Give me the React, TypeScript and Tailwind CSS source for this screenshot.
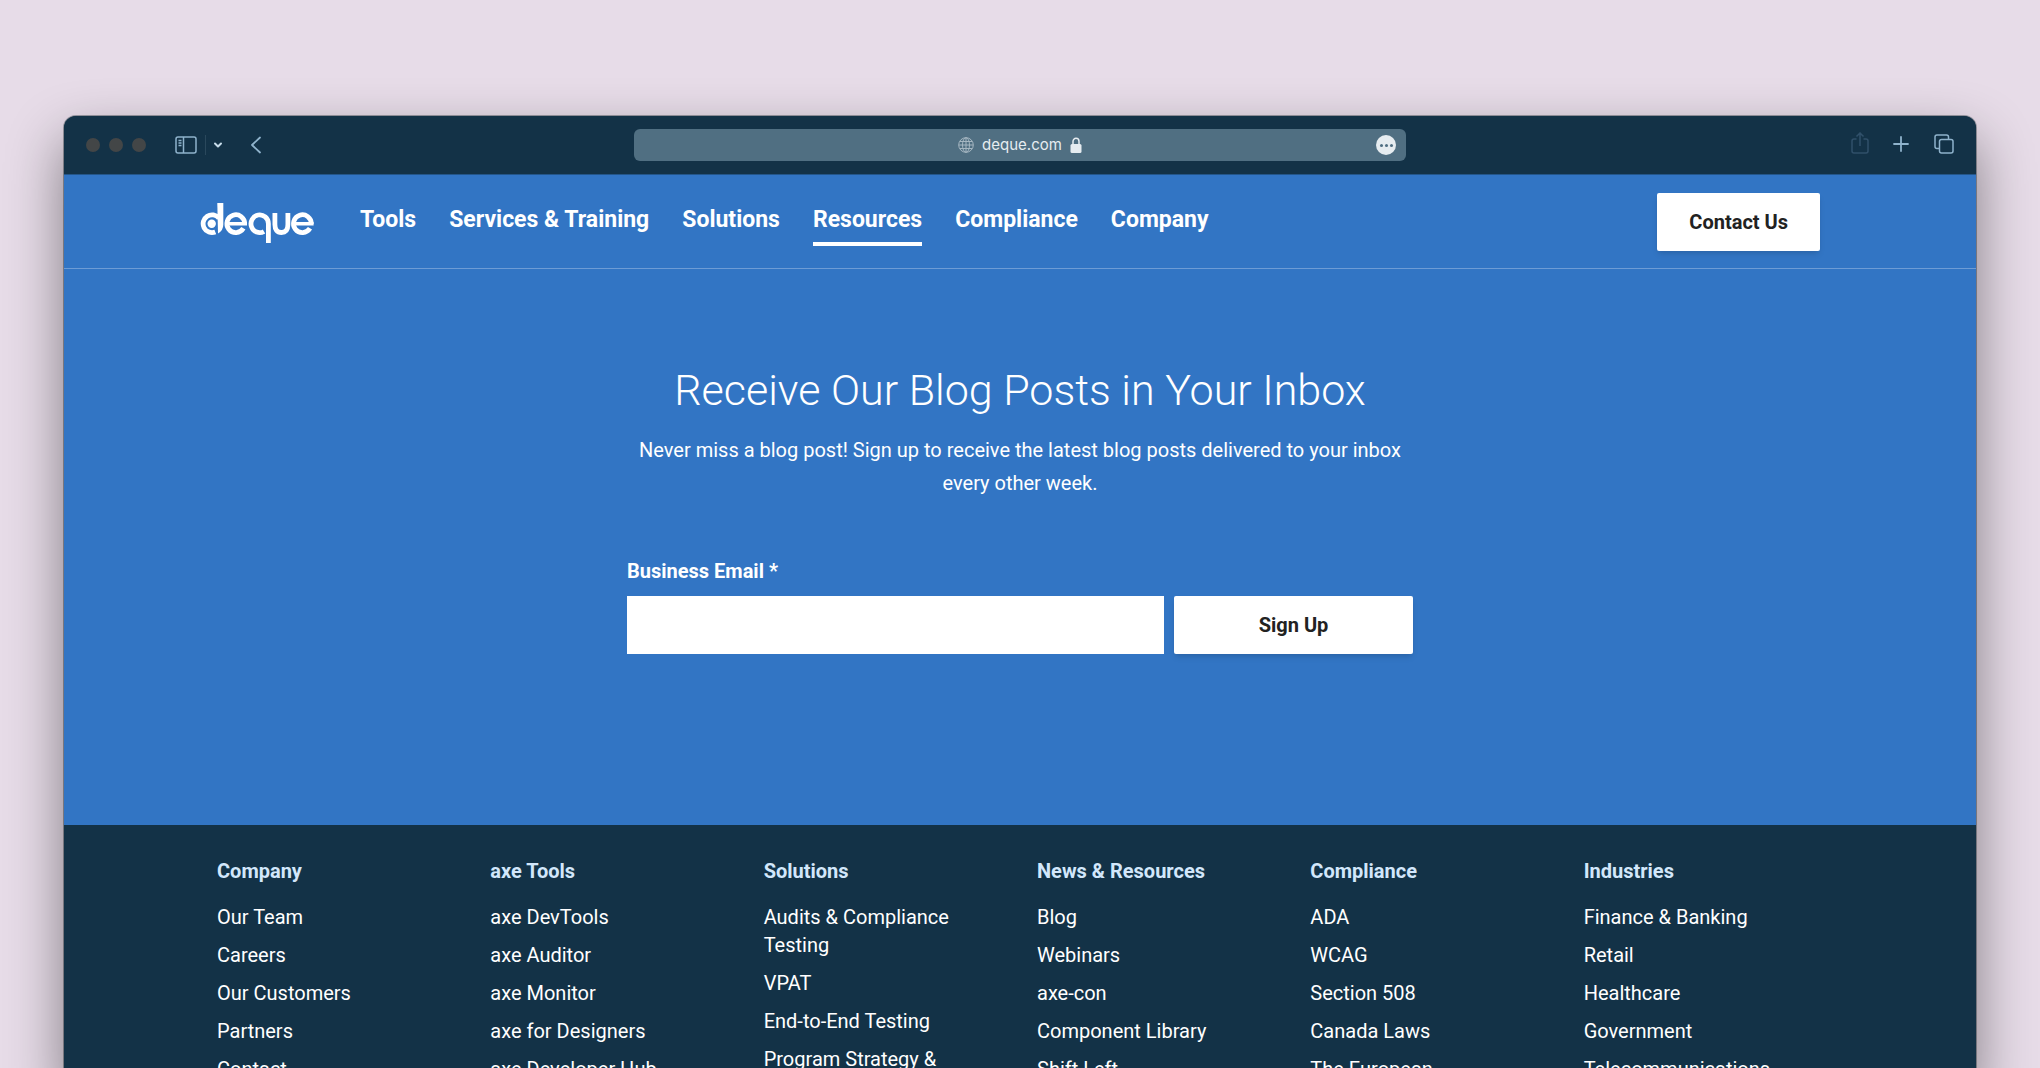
import { ChevronDown, Plus } from "lucide-react";

const navItems = ["Tools", "Services & Training", "Solutions", "Resources", "Compliance", "Company"];

const footerColumns = [
  { title: "Company", links: ["Our Team", "Careers", "Our Customers", "Partners", "Contact"] },
  { title: "axe Tools", links: ["axe DevTools", "axe Auditor", "axe Monitor", "axe for Designers", "axe Developer Hub"] },
  { title: "Solutions", links: ["Audits & Compliance Testing", "VPAT", "End-to-End Testing", "Program Strategy &"] },
  { title: "News & Resources", links: ["Blog", "Webinars", "axe-con", "Component Library", "Shift Left"] },
  { title: "Compliance", links: ["ADA", "WCAG", "Section 508", "Canada Laws", "The European"] },
  { title: "Industries", links: ["Finance & Banking", "Retail", "Healthcare", "Government", "Telecommunications"] },
];

function Logo() {
  return (
    <svg width="114" height="41" viewBox="0 0 114 41" fill="none" stroke="white" strokeWidth="4.800">
      <path d="M19 15.200A8.900 8.900 0 1 0 15.300 29" />
      <circle cx="11.700" cy="20.800" r="4.200" fill="white" stroke="none" />
      <path d="M17.300 0h6v21.500q0 6-5.300 9z" fill="white" stroke="none" />
      <path d="M44.700 21A8.900 8.900 0 1 0 43.400 25.300" />
      <path d="M28 20.700h19" strokeWidth="3.400" />
      <path d="M68.400 40V20.700A8.700 8.900 0 1 0 64 28.500" />
      <path d="M74.900 10v11.500q0 8 6.500 8t6.500-8V10" />
      <path d="M111.300 21A8.900 8.900 0 1 0 110 25.300" />
      <path d="M94.600 20.700h19" strokeWidth="3.400" />
    </svg>
  );
}

function BrowserBar() {
  return (
    <div className="grid grid-cols-[1fr_minmax(0,772px)_1fr] items-center h-[58px] bg-[#133247] text-[#8fb3cc]">
      <div className="flex items-center pl-[22px]">
        <div className="flex gap-[9px]">
          {[0, 1, 2].map((i) => (
            <span key={i} className="w-3.5 h-3.5 rounded-full bg-[#434647]" />
          ))}
        </div>
        <button aria-label="Sidebar" className="ml-[29px]">
          <svg width="22" height="18" viewBox="0 0 22 18" fill="none" stroke="currentColor" strokeWidth="1.500">
            <rect x="1" y="1" width="20" height="16" rx="2" />
            <path d="M8.500 1v16M3.500 4.500h3M3.500 7h3M3.500 9.500h3" />
          </svg>
        </button>
        <span className="ml-2 w-px h-5 bg-[#2a485c]" />
        <button aria-label="Tab groups" className="ml-1.5 text-[#c6dcea]">
          <ChevronDown size={12} strokeWidth={4} />
        </button>
        <button aria-label="Back" className="ml-[26px]">
          <svg width="12" height="18" viewBox="0 0 12 18" fill="none" stroke="currentColor" strokeWidth="1.800" strokeLinecap="round" strokeLinejoin="round">
            <path d="M10 1.500L2 9l8 7.500" />
          </svg>
        </button>
      </div>
      <div className="flex items-center h-8 px-2.5 rounded-md bg-[#506f82] text-[#e6ecf0]">
        <span className="w-5" />
        <div className="flex flex-1 items-center justify-center gap-2">
          <svg width="16" height="16" viewBox="0 0 16 16" fill="none" stroke="#a5b6c1">
            <circle cx="8" cy="8" r="7.300" />
            <ellipse cx="8" cy="8" rx="3.500" ry="7.300" />
            <path d="M8 1v14M1 8h14M2 4.500h12M2 11.500h12" />
          </svg>
          <span className="font-['Inter',sans-serif] text-[15px]">deque.com</span>
          <svg width="12" height="16" viewBox="0 0 12 16" fill="none">
            <rect x="0.500" y="7" width="11" height="9" rx="1.500" fill="currentColor" />
            <path d="M3 7.500V4.500a3 3.200 0 0 1 6 0v3" stroke="currentColor" strokeWidth="1.500" />
          </svg>
        </div>
        <button aria-label="Page settings" className="flex items-center justify-center gap-0.5 w-5 h-5 rounded-full bg-[#e6ecf0]">
          <span className="w-[3px] h-[3px] rounded-full bg-[#506f82]" />
          <span className="w-[3px] h-[3px] rounded-full bg-[#506f82]" />
          <span className="w-[3px] h-[3px] rounded-full bg-[#506f82]" />
        </button>
      </div>
      <div className="flex items-center justify-end pr-[22px]">
        <button aria-label="Share" className="pb-1 text-[#30506a]">
          <svg width="18" height="22" viewBox="0 0 18 22" fill="none" stroke="currentColor" strokeWidth="1.500">
            <path d="M5.500 7H3a2 2 0 0 0-2 2v10a2 2 0 0 0 2 2h12a2 2 0 0 0 2-2V9a2 2 0 0 0-2-2h-2.500M9 14V1.500M5.500 4.500L9 1l3.500 3.500" />
          </svg>
        </button>
        <button aria-label="New tab" className="ml-5 pb-0.5">
          <Plus size={24} strokeWidth={1.8} />
        </button>
        <button aria-label="Tab overview" className="ml-[21px] pb-0.5">
          <svg width="20" height="20" viewBox="0 0 20 20" fill="none" stroke="currentColor" strokeWidth="1.500">
            <rect x="5.500" y="5.500" width="13.500" height="13.500" rx="2" />
            <path d="M5 14.500H3a2 2 0 0 1-2-2V3a2 2 0 0 1 2-2h9.500a2 2 0 0 1 2 2v2" />
          </svg>
        </button>
      </div>
    </div>
  );
}

export default function App() {
  return (
    <div className="h-screen overflow-hidden bg-[#e7dce8] px-16 pt-[116px] font-['Roboto',sans-serif]">
      <div className="rounded-t-xl overflow-hidden bg-[#133247] shadow-[0_24px_56px_rgba(0,0,0,0.45),0_0_0_1px_rgba(60,70,80,0.45)]">
        <BrowserBar />

        <div className="bg-[#3275c4] text-white">
          <header className="border-t border-b border-t-[#24568a] border-b-[#6d9cd5]">
            <div className="flex items-center max-w-[1640px] h-[93px] mx-auto pr-5">
              <a href="#" aria-label="deque" className="pt-1">
                <Logo />
              </a>
              <nav className="flex ml-[46px] pt-0.5 gap-[33px]">
                {navItems.map((item) => (
                  <a
                    key={item}
                    href="#"
                    className={`pt-1 pb-1.5 text-[23px] leading-8 font-bold border-b-4 ${item === "Resources" ? "border-white" : "border-transparent"}`}
                  >
                    {item}
                  </a>
                ))}
              </nav>
              <button className="ml-auto h-[58px] px-8 rounded-xs bg-white text-xl font-bold text-[#222] shadow-md">
                Contact Us
              </button>
            </div>
          </header>

          <section className="max-w-[786px] mx-auto pt-[92px] pb-[171px]">
            <h1 className="text-center text-[43px] leading-[58px] font-light">Receive Our Blog Posts in Your Inbox</h1>
            <p className="mt-[15px] text-center text-xl leading-[33px]">
              Never miss a blog post! Sign up to receive the latest blog posts delivered to your inbox every other week.
            </p>
            <form className="mt-[57px]">
              <label htmlFor="email" className="block text-xl leading-7 font-bold">
                Business Email *
              </label>
              <div className="flex gap-[10px] mt-[11px]">
                <input id="email" type="email" className="flex-1 min-w-0 h-[58px] px-4 bg-white text-xl text-[#222]" />
                <button type="button" className="w-[239px] h-[58px] rounded-xs bg-white text-xl font-bold text-[#222] shadow-md">
                  Sign Up
                </button>
              </div>
            </form>
          </section>
        </div>

        <footer className="bg-[#133247] text-white">
          <div className="grid grid-cols-6 max-w-[1640px] mx-auto pt-8">
            {footerColumns.map((col) => (
              <div key={col.title} className="px-[17px]">
                <h2 className="text-xl leading-7 font-bold text-[#d2e7fb]">{col.title}</h2>
                <ul className="mt-[18px] space-y-[10px]">
                  {col.links.map((link) => (
                    <li key={link} className="text-xl leading-7">
                      <a href="#">{link}</a>
                    </li>
                  ))}
                </ul>
              </div>
            ))}
          </div>
        </footer>
      </div>
    </div>
  );
}
